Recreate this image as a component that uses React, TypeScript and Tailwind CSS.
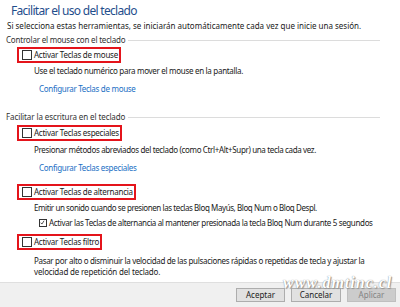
import React from "react";

function Box({ label }: { label: string }) {
  return (
    <div className="ml-[17px] flex h-[16px] w-fit items-center whitespace-nowrap border-2 border-[#e4141b] pl-[3px] pr-[1px]">
      <span className="h-[10px] w-[10px] border border-[#333] bg-white" />
      <span className="ml-[2px] leading-none tracking-[-0.25px]">{label}</span>
    </div>
  );
}

function GroupHeader({ label, track }: { label: string; track: string }) {
  return (
    <div className="ml-[6px] mr-[20px] flex h-[10px] items-center whitespace-nowrap text-[#333]">
      <span className={`leading-none ${track}`}>{label}</span>
      <div className="ml-[3px] h-px flex-1 bg-[#dcdcdc]" />
    </div>
  );
}

export default function App() {
  return (
    <div className="relative flex h-[307px] w-[400px] flex-col overflow-hidden bg-white font-['Noto_Sans',sans-serif] text-[8px] text-[#1a1a1a]">
      <div className="flex-1 whitespace-nowrap pt-[3px]">
        <div className="ml-[11px] flex h-[16px] items-center text-[12px] leading-none tracking-[-0.7px] text-[#1f4e8c]">
          Facilitar el uso del teclado
        </div>
        <div className="ml-[7px] mt-[2px] flex h-[10px] items-center leading-none">
          Si selecciona estas herramientas, se iniciarán automáticamente cada vez que inicie una sesión.
        </div>

        <div className="mt-[4px]">
          <GroupHeader label="Controlar el mouse con el teclado" track="tracking-[-0.2px]" />
        </div>
        <div className="mt-[2px]">
          <Box label="Activar Teclas de mouse" />
        </div>
        <div className="ml-[34px] mt-[3px] flex h-[10px] items-center leading-none tracking-[-0.3px]">
          Use el teclado numérico para mover el mouse en la pantalla.
        </div>
        <div className="ml-[39px] mt-[8px] flex h-[10px] items-center leading-none tracking-[-0.3px] text-[#1a6fc4]">
          Configurar Teclas de mouse
        </div>

        <div className="mt-[18px]">
          <GroupHeader label="Facilitar la escritura en el teclado" track="tracking-[-0.1px]" />
        </div>
        <div className="mt-[3px]">
          <Box label="Activar Teclas especiales" />
        </div>
        <div className="ml-[34px] mt-[4px] flex h-[10px] items-center leading-none tracking-[-0.35px]">
          Presionar métodos abreviados del teclado (como Ctrl+Alt+Supr) una tecla cada vez.
        </div>
        <div className="ml-[39px] mt-[8px] flex h-[10px] items-center leading-none tracking-[-0.3px] text-[#1a6fc4]">
          Configurar Teclas especiales
        </div>

        <div className="mt-[11px]">
          <Box label="Activar Teclas de alternancia" />
        </div>
        <div className="ml-[34px] mt-[3px] flex h-[10px] items-center leading-none tracking-[-0.42px]">
          Emitir un sonido cuando se presionen las teclas Bloq Mayús, Bloq Num o Bloq Despl.
        </div>
        <div className="ml-[39px] mt-[4px] flex h-[12px] items-center">
          <span className="relative h-[8px] w-[8px] border border-[#333] bg-white">
            <svg viewBox="0 0 8 8" className="absolute left-0 top-0 h-[6px] w-[6px]">
              <path d="M0.8 3.6 L2.6 5.4 L5.4 1" stroke="#222" strokeWidth="1" fill="none" />
            </svg>
          </span>
          <span className="ml-[2px] leading-none tracking-[-0.35px]">
            Activar las Teclas de alternancia al mantener presionada la tecla Bloq Num durante 5 segundos
          </span>
        </div>

        <div className="mt-[5px]">
          <Box label="Activar Teclas filtro" />
        </div>
        <div className="ml-[34px] mt-[5px] leading-[11px]">
          <div className="tracking-[-0.32px]">
            Pasar por alto o disminuir la velocidad de las pulsaciones rápidas o repetidas de tecla y ajustar la
          </div>
          <div className="tracking-[-0.17px]">velocidad de repetición del teclado.</div>
        </div>
      </div>

      <div className="flex h-[25px] items-center justify-end gap-[6px] border-t border-[#dfdfdf] bg-[#f0f0f0] pr-[4px]">
        <button className="h-[14px] w-[49px] border border-[#adadad] bg-[#e1e1e1] leading-none">Aceptar</button>
        <button className="h-[14px] w-[50px] border border-[#adadad] bg-[#e1e1e1] leading-none">Cancelar</button>
        <button className="h-[14px] w-[49px] border border-[#bfbfbf] bg-[#cccccc] leading-none text-[#838383]">
          Aplicar
        </button>
      </div>

      <div className="absolute left-[283px] top-[275px] font-['Liberation_Serif',serif] text-[16px] font-bold italic leading-none tracking-[1px] text-white [text-shadow:0_0_1px_#777,1px_1px_1px_#999]">
        www.dmtinc.cl
      </div>
    </div>
  );
}
